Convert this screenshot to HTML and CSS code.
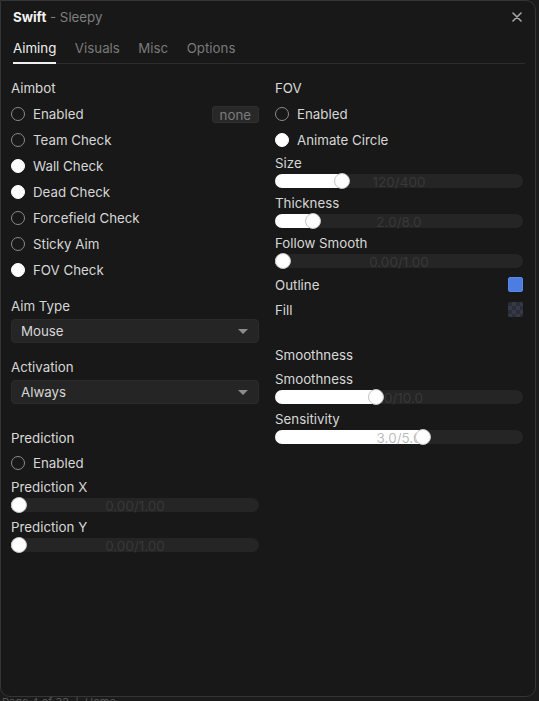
FILE: index.html
```html
<!DOCTYPE html>
<html>
<head>
<meta charset="utf-8">
<link rel="stylesheet" href="styles.css">
</head>
<body>
<div class="win">
  <div class="head">
    <div class="title"><b>Swift</b><span class="sub"> - Sleepy</span></div>
    <svg class="close" width="10" height="10" viewBox="0 0 10 10"><path d="M1 1L9 9M9 1L1 9" stroke="#a8a8a8" stroke-width="1.6" stroke-linecap="round"/></svg>
  </div>
  <div class="tabs">
    <div class="tab active">Aiming</div>
    <div class="tab">Visuals</div>
    <div class="tab">Misc</div>
    <div class="tab">Options</div>
  </div>
  <div class="content">
    <div class="col">
      <div class="sec">Aimbot</div>
      <div class="row"><span class="chk"></span><span class="lbl">Enabled</span><span class="key">none</span></div>
      <div class="row"><span class="chk"></span><span class="lbl">Team Check</span></div>
      <div class="row"><span class="chk on"></span><span class="lbl">Wall Check</span></div>
      <div class="row"><span class="chk on"></span><span class="lbl">Dead Check</span></div>
      <div class="row"><span class="chk"></span><span class="lbl">Forcefield Check</span></div>
      <div class="row"><span class="chk"></span><span class="lbl">Sticky Aim</span></div>
      <div class="row"><span class="chk on"></span><span class="lbl">FOV Check</span></div>

      <div class="flabel g1">Aim Type</div>
      <div class="drop"><span>Mouse</span><span class="tri"></span></div>
      <div class="flabel g2">Activation</div>
      <div class="drop"><span>Always</span><span class="tri"></span></div>

      <div class="sec pred">Prediction</div>
      <div class="row"><span class="chk"></span><span class="lbl">Enabled</span></div>
      <div class="flabel s0">Prediction X</div>
      <div class="slider"><div class="fill" style="width:7px"></div><div class="val">0.00/1.00</div><div class="knob" style="left:0px"></div></div>
      <div class="flabel s1">Prediction Y</div>
      <div class="slider"><div class="fill" style="width:7px"></div><div class="val">0.00/1.00</div><div class="knob" style="left:0px"></div></div>
    </div>
    <div class="col">
      <div class="sec">FOV</div>
      <div class="row"><span class="chk"></span><span class="lbl">Enabled</span></div>
      <div class="row r25"><span class="chk on"></span><span class="lbl">Animate Circle</span></div>
      <div class="flabel s0">Size</div>
      <div class="slider"><div class="fill" style="width:67px"></div><div class="val">120/400</div><div class="knob" style="left:59px"></div></div>
      <div class="flabel s1">Thickness</div>
      <div class="slider"><div class="fill" style="width:38px"></div><div class="val">2.0/8.0</div><div class="knob" style="left:30px"></div></div>
      <div class="flabel s1">Follow Smooth</div>
      <div class="slider"><div class="fill" style="width:7px"></div><div class="val">0.00/1.00</div><div class="knob" style="left:0px"></div></div>
      <div class="crow first"><span class="lbl">Outline</span><span class="sw blue"></span></div>
      <div class="crow"><span class="lbl">Fill</span><span class="sw check"></span></div>

      <div class="sec smooth">Smoothness</div>
      <div class="flabel s0">Smoothness</div>
      <div class="slider"><div class="fill" style="width:101px"></div><div class="val">1.0/10.0</div><div class="knob" style="left:93px"></div></div>
      <div class="flabel s1">Sensitivity</div>
      <div class="slider"><div class="fill" style="width:148px"></div><div class="val">3.0/5.0</div><div class="knob" style="left:140px"></div></div>
    </div>
  </div>
</div>
<div class="under">Page 4 of 33 &nbsp;|&nbsp; Home</div>
</body>
</html>
```
FILE: styles.css
```css
html, body {
  margin: 0;
  padding: 0;
  background: #1b1b1b;
  height: 701px;
  overflow: hidden;
  font-family: Inter, "Noto Sans", sans-serif;
  font-size: 13.3px;
  color: #d6d6d6;
}
.win {
  width: 536px;
  height: 697px;
  box-sizing: border-box;
  background: #181818;
  border: 1px solid #353535;
  border-radius: 0 10px 10px 10px;
  display: flex;
  flex-direction: column;
}
.head {
  height: 31px;
  padding: 0 13px 0 12px;
  display: flex;
  align-items: center;
  justify-content: space-between;
}
.title b { color: #f2f2f2; font-weight: 700; }
.title .sub { color: #7e7e7e; }
.tabs {
  height: 32px;
  margin: 0 10px 0 12px;
  display: flex;
  gap: 18.5px;
  border-bottom: 1px solid #2d2d2d;
  box-sizing: border-box;
}
.tab {
  color: #7a7a7a;
  line-height: 30px;
  padding-top: 1px;
  border-bottom: 2px solid transparent;
  margin-bottom: -1px;
}
.tab.active { color: #f0f0f0; border-bottom-color: #f0f0f0; }
.content {
  padding: 11px 12px 0 10px;
  display: grid;
  grid-template-columns: 248px 248px;
  column-gap: 16px;
  align-items: start;
}
.col { display: flex; flex-direction: column; }
.sec { height: 26px; line-height: 26px; color: #dadada; }
.row {
  height: 26px;
  display: flex;
  align-items: center;
}
.row.r25 { height: 25px; }
.chk {
  width: 14px;
  height: 14px;
  box-sizing: border-box;
  border-radius: 50%;
  border: 1.5px solid #8a8a8a;
  margin-right: 8px;
  flex: none;
}
.chk.on { background: #fff; border-color: #fff; }
.lbl { color: #d6d6d6; }
.key {
  margin-left: auto;
  height: 17px;
  line-height: 17px;
  padding: 0 7px;
  background: #282828;
  border: 1px solid #2f2f2f;
  border-radius: 3px;
  color: #7c7c7c;
  box-sizing: border-box;
}
.flabel { height: 18px; line-height: 18px; color: #d6d6d6; }
.flabel.g1 { margin-top: 14px; margin-bottom: 4px; }
.flabel.g2 { margin-top: 15px; margin-bottom: 4px; }
.flabel.s0 { margin-top: 2px; margin-bottom: 2px; }
.flabel.s1 { margin-top: 6px; margin-bottom: 2px; }
.sec.pred { margin-top: 22px; height: 24px; line-height: 24px; }
.drop {
  height: 24px;
  background: #252525;
  border: 1px solid #2b2b2b;
  box-sizing: border-box;
  border-radius: 4px;
  padding: 0 10px 0 9px;
  display: flex;
  align-items: center;
  justify-content: space-between;
  color: #d6d6d6;
}
.tri {
  width: 0;
  height: 0;
  border-left: 5px solid transparent;
  border-right: 5px solid transparent;
  border-top: 5px solid #8c8c8c;
}
.slider {
  position: relative;
  height: 14px;
  background: #252525;
  border-radius: 7px;
}
.fill {
  height: 14px;
  background: #fff;
  border-radius: 7px 0 0 7px;
}
.val {
  position: absolute;
  left: 0;
  right: 0;
  top: 0;
  height: 14px;
  line-height: 16px;
  text-align: center;
  font-size: 13.5px;
  color: rgba(85, 85, 85, 0.42);
}
.knob {
  position: absolute;
  top: -1px;
  width: 16px;
  height: 16px;
  box-sizing: border-box;
  border-radius: 50%;
  background: #fff;
  border: 1px solid #c4c4c4;
}
.crow {
  height: 25px;
  display: flex;
  align-items: center;
  justify-content: space-between;
}
.crow.first { margin-top: 4px; }
.sw {
  width: 15px;
  height: 15px;
  border-radius: 2px;
  box-sizing: border-box;
}
.sw.blue { background: #4d7de0; border: 1px solid #5b87e6; }
.sw.check {
  background-color: #2b2e38;
  background-image: conic-gradient(#363a48 25%, transparent 0 50%, #363a48 0 75%, transparent 0);
  background-size: 8px 8px;
}
.sec.smooth { margin-top: 20px; }
.under {
  height: 4px;
  overflow: hidden;
  line-height: 10px;
  padding-left: 2px;
  font-size: 11px;
  color: #555;
}
```
